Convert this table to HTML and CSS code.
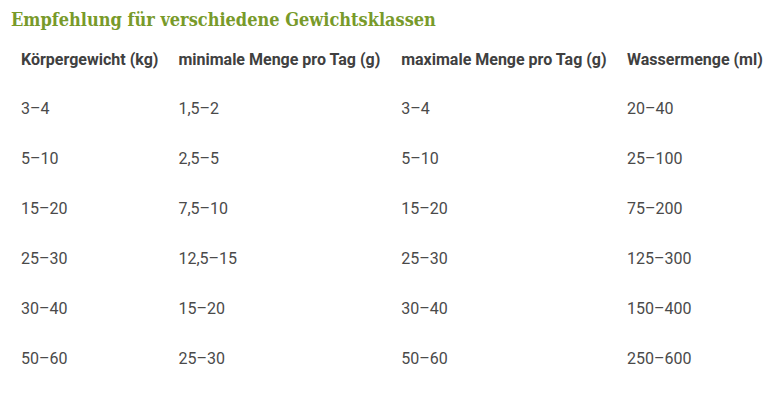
FILE: index.html
```html
<!DOCTYPE html>
<html lang="de">
<head>
<meta charset="utf-8">
<link rel="stylesheet" href="styles.css">
</head>
<body>
<h2 class="title">Empfehlung für verschiedene Gewichtsklassen</h2>
<table class="tbl">
  <thead>
    <tr><th class="c1">Körpergewicht (kg)</th><th class="c2">minimale Menge pro Tag (g)</th><th class="c3">maximale Menge pro Tag (g)</th><th class="c4">Wassermenge (ml)</th></tr>
  </thead>
  <tbody>
    <tr><td>3–4</td><td>1,5–2</td><td>3–4</td><td>20–40</td></tr>
    <tr><td>5–10</td><td>2,5–5</td><td>5–10</td><td>25–100</td></tr>
    <tr><td>15–20</td><td>7,5–10</td><td>15–20</td><td>75–200</td></tr>
    <tr><td>25–30</td><td>12,5–15</td><td>25–30</td><td>125–300</td></tr>
    <tr><td>30–40</td><td>15–20</td><td>30–40</td><td>150–400</td></tr>
    <tr><td>50–60</td><td>25–30</td><td>50–60</td><td>250–600</td></tr>
  </tbody>
</table>
</body>
</html>
```
FILE: styles.css
```css
html, body { margin: 0; padding: 0; background: #fff; }
body { padding: 8px 11px 8px; }
.title {
  margin: 0;
  font-family: "DejaVu Serif Condensed", "DejaVu Serif", serif;
  font-weight: bold;
  font-size: 18px;
  line-height: 24px;
  color: #789a2a;
}
.tbl {
  border-collapse: collapse;
  font-family: Roboto, sans-serif;
  font-size: 16px;
  color: #444;
  margin-top: 3px;
}
.tbl th, .tbl td {
  text-align: left;
  padding: 0 10px;
  height: 50px;
  vertical-align: middle;
  white-space: nowrap;
}
.tbl th { font-weight: 700; color: #404040; height: 48px; }
.tbl td { color: #4a4a4a; }
.c1 { width: 137px; }
.c2 { width: 203px; }
.c3 { width: 206px; }
.c4 { width: 136px; }
```
